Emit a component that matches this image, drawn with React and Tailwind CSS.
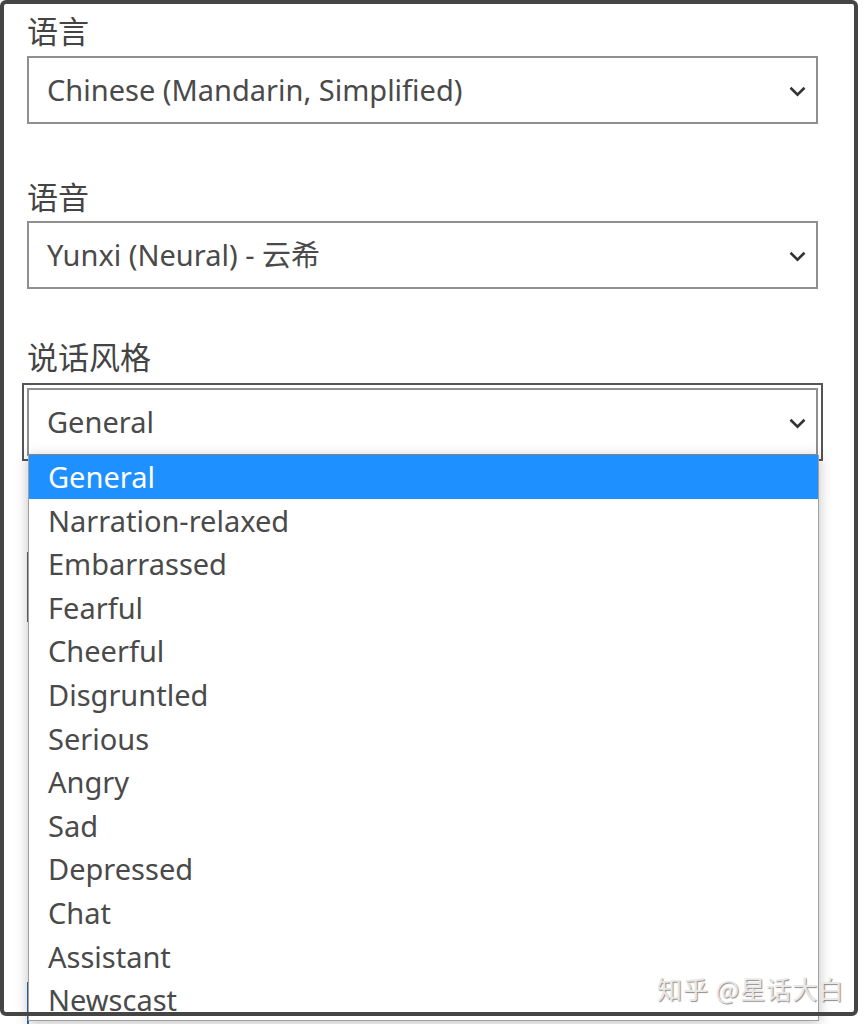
import React from 'react';

const font = "font-['Segoe_UI','Noto_Sans','Noto_Sans_CJK_SC',sans-serif]";

const styles = [
  'General', 'Narration-relaxed', 'Embarrassed', 'Fearful', 'Cheerful', 'Disgruntled',
  'Serious', 'Angry', 'Sad', 'Depressed', 'Chat', 'Assistant', 'Newscast',
];

const Chevron = () => (
  <svg width="17" height="11" viewBox="0 0 17 11" className="shrink-0 mt-[2px]">
    <path d="M1.5 1.8 L8.5 8.6 L15.5 1.8" fill="none" stroke="#333" strokeWidth="2.6" />
  </svg>
);

const Select = ({ value, focused }) => (
  <div
    className={`flex items-center justify-between w-[791px] h-[68px] border-2 border-[#8f8f8f] bg-white pl-[18px] pr-[10px] text-[29px] text-[#4a4a4a]
      ${focused ? 'outline-2 outline-offset-[3px] outline-[#555]' : ''}`}
  >
    <span>{value}</span>
    <Chevron />
  </div>
);

const Label = ({ children, className }) => (
  <div className={`text-[31px] leading-[36px] text-[#444] ${className || ''}`}>{children}</div>
);

export default function App() {
  return (
    <div className={`relative w-[865px] h-[1024px] bg-white overflow-hidden ${font}`}>
      <div className="pl-[27px] pt-[13px]">
        <Label>语言</Label>
        <div className="mt-[7px]">
          <Select value="Chinese (Mandarin, Simplified)" />
        </div>
        <Label className="mt-[55px]">语音</Label>
        <div className="mt-[6px]">
          <Select value="Yunxi (Neural) - 云希" />
        </div>
        <Label className="mt-[50px]">说话风格</Label>
        <div className="mt-[13px]">
          <Select value="General" focused />
        </div>
        {/* fields hidden behind the open list */}
        <div className="mt-[96px] w-[791px] h-[70px] border-2 border-[#666]" />
        <div className="mt-[360px] w-[791px] h-[60px] border-l-2 border-[#2b6cb0]" />
      </div>

      {/* open dropdown list */}
      <div className="absolute left-[28px] top-[455px] w-[791px] h-[566px] bg-white border border-[#a0a0a0] border-t-0 shadow-[0_2px_12px_rgba(0,0,0,0.25)] overflow-hidden">
        {styles.map((s, i) => (
          <div
            key={s}
            className={`h-[43.6px] flex items-center pl-[19px] text-[29px] ${
              i === 0 ? 'bg-[#1e90ff] text-white' : 'text-[#4a4a4a]'
            }`}
          >
            {s}
          </div>
        ))}
      </div>

      {/* screenshot frame */}
      <div className="absolute left-0 top-0 w-[858px] h-[1016px] border-4 border-[#454545] rounded-[6px] pointer-events-none" />

      {/* watermark */}
      <div className="absolute left-[657px] top-[970px] text-[25px] tracking-[1px] text-[#e8e8e8] [text-shadow:1px_1px_1px_rgba(0,0,0,0.45)] font-['Noto_Sans_CJK_SC',sans-serif]">
        知乎 @星话大白
      </div>
    </div>
  );
}
